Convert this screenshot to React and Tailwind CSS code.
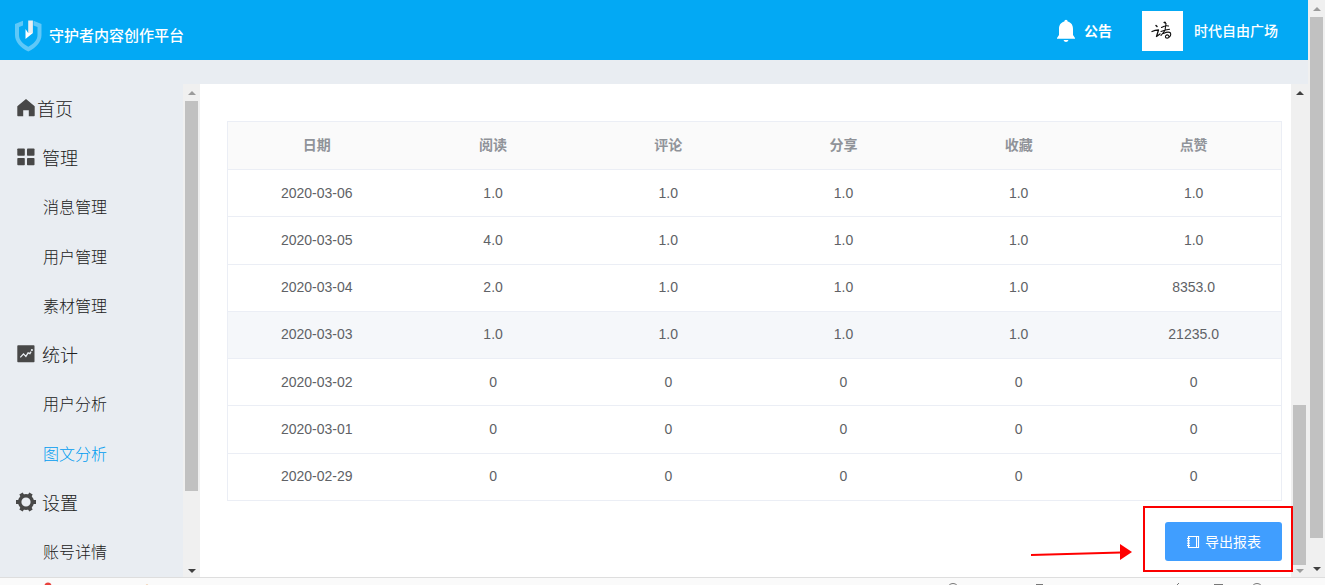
import React from "react";

const menu = [
  { label: "首页", icon: "home", tight: true },
  { label: "管理", icon: "grid" },
  { label: "消息管理" },
  { label: "用户管理" },
  { label: "素材管理" },
  { label: "统计", icon: "chart" },
  { label: "用户分析" },
  { label: "图文分析", active: true },
  { label: "设置", icon: "gear" },
  { label: "账号详情" },
];

const columns = ["日期", "阅读", "评论", "分享", "收藏", "点赞"];

const rows = [
  ["2020-03-06", "1.0", "1.0", "1.0", "1.0", "1.0"],
  ["2020-03-05", "4.0", "1.0", "1.0", "1.0", "1.0"],
  ["2020-03-04", "2.0", "1.0", "1.0", "1.0", "8353.0"],
  ["2020-03-03", "1.0", "1.0", "1.0", "1.0", "21235.0"],
  ["2020-03-02", "0", "0", "0", "0", "0"],
  ["2020-03-01", "0", "0", "0", "0", "0"],
  ["2020-02-29", "0", "0", "0", "0", "0"],
];

function MenuIcon({ name }) {
  return (
    <svg viewBox="0 0 20 20" className="mb-1 size-5 shrink-0 fill-[#484848]" aria-hidden="true">
      {name === "home" && <path d="M10 1 1.3 8.2v9.3q0 .7.7.7h5.2v-6h5.6v6H18q.7 0 .7-.7V8.2Z" />}
      {name === "grid" && (
        <>
          <rect x="1.3" y="1.5" width="7.5" height="7.2" rx=".8" />
          <rect x="11" y="1.5" width="7.5" height="7.2" rx=".8" />
          <rect x="1.3" y="11" width="7.5" height="7.2" rx=".8" />
          <rect x="11" y="11" width="7.5" height="7.2" rx=".8" />
        </>
      )}
      {name === "chart" && (
        <>
          <rect x="1.3" y="1.3" width="17.2" height="17" rx=".8" />
          <path d="m4.3 13.4 3.2-3.5 2.4 2.5 2.2-3.5 1.8.8 1.2-2" fill="none" stroke="#e9edf2" strokeWidth="1.3" />
          <circle cx="15.900" cy="6" r="1.1" fill="#e9edf2" />
        </>
      )}
      {name === "gear" && (
        <>
          <circle cx="10" cy="10" r="6.300" fill="none" stroke="#484848" strokeWidth="3.400" />
          <path d="M0 8h3v4H0ZM17 8h3v4h-3ZM3.300 2.400 6.700.4l1.500 2.600-3.400 2ZM13.300.4l3.400 2L15.200 5l-3.400-2ZM4.800 15l3.400 2-1.500 2.600-3.400-2ZM15.200 15l1.500 2.600-3.400 2-1.500-2.600Z" />
        </>
      )}
    </svg>
  );
}

function Arrow({ down, dark }) {
  return (
    <svg viewBox="0 0 8 4" className={`h-1 w-2 ${dark ? "fill-[#404040]" : "fill-[#9b9b9b]"}`} aria-hidden="true">
      <path d={down ? "M0 0h8L4 4Z" : "M4 0 8 4H0Z"} />
    </svg>
  );
}

function Scrollbar({ start, size, upDark, downDark, shortEnd }) {
  return (
    <div className="flex w-[17px] shrink-0 flex-col bg-[#f0f0f0]" aria-hidden="true">
      <div className="flex h-[17px] items-center justify-center">
        <Arrow dark={upDark} />
      </div>
      <div className="flex flex-1 flex-col px-0.5">
        <div style={{ height: `${start}%` }} />
        <div className="bg-[#c1c1c1]" style={{ height: `${size}%` }} />
      </div>
      <div className={`flex items-center justify-center ${shortEnd ? "h-3" : "h-[17px]"}`}>
        <Arrow down dark={downDark} />
      </div>
    </div>
  );
}

function Header() {
  return (
    <header className="flex h-15 shrink-0 items-center bg-[#03a9f4] pt-px pr-[30px] pl-[14px] text-white">
      <a href="#" className="flex items-center gap-[7px] pt-2.5">
        <svg viewBox="0 0 28 32" className="h-8 w-7" aria-hidden="true">
          <path d="M9 .8 1 4v11c0 6.500 5 12.500 13.300 16.600C22.500 27.500 27.500 21.500 27.500 15V4l-8-3.200v4.700l4 1.500v8c0 4.800-3.500 8.700-9.200 11.700C8.500 23.700 5 19.800 5 15V7l4-1.500Z" fill="#5fc8f8" />
          <path d="M14.200.5h4.700v12.600h-4.700Z" fill="#e9edf0" />
          <path d="M11.500 9v10l7.400-5.900-4.700-.2Z" fill="#fff" />
        </svg>
        <span className="text-[15px] leading-5 font-medium">守护者内容创作平台</span>
      </a>
      <div className="ml-auto flex items-center">
        <button type="button" className="flex items-center gap-2 text-[14px] leading-5 font-bold">
          <svg viewBox="0 0 20 24" className="h-6 w-5 fill-white" aria-hidden="true">
            <path d="M10 .8q1.600 0 1.700 1.700C15.600 3.600 17 6.500 17 10v6l2 3v.8H1V19l2-3v-6c0-3.500 1.400-6.400 5.300-7.500Q8.400.8 10 .8ZM7.500 21h5q-.6 2-2.500 2t-2.500-2Z" />
          </svg>
          公告
        </button>
        <a href="#" className="ml-[30px] flex items-center gap-[11px] text-[14px] leading-5 font-medium">
          <svg viewBox="0 0 41 40" className="h-10 w-[41px] bg-white" fill="none" stroke="#111" strokeLinecap="round" strokeLinejoin="round" aria-hidden="true">
            <path d="m14 14.500 1 1" strokeWidth="1.500" />
            <path d="M10 20.500q3-1.500 6.500-1.500l-2 6.500 3.500-2.500" strokeWidth="1.300" />
            <path d="M19.500 16.500q4-2.500 7-1.500M23.500 11.500q-.5-1-1.500 0l2 1-1 7M19 20.500q5-2 8.500-2.200M23 19.500l-4 5M21.500 22.500q5-2.500 7-.5 1 3-2.500 5-3 .5-2.500-2 2-2.500 3.500.5" strokeWidth="1.100" />
          </svg>
          时代自由广场
        </a>
      </div>
    </header>
  );
}

function Sidebar() {
  return (
    <nav className="flex w-[183px] shrink-0 flex-col">
      {menu.map((item) => (
        <a
          key={item.label}
          href="#"
          className={`flex flex-1 items-center pt-0.5 ${
            item.icon ? "pl-4 text-[18px]" : "pl-[43px] text-[16px]"
          } ${item.tight ? "gap-px" : "gap-1.5"} ${item.active ? "text-[#009cf0]" : "text-[#202020]"} font-light leading-6`}
        >
          {item.icon && <MenuIcon name={item.icon} />}
          {item.label}
        </a>
      ))}
    </nav>
  );
}

function ReportTable() {
  return (
    <table className="h-[380px] w-full table-fixed border border-[#ebeef5] text-center text-[14px] leading-5 text-[#606266]">
      <colgroup>
        <col className="w-[178px]" />
        <col span={5} />
      </colgroup>
      <thead>
        <tr className="h-12 border-b border-[#ebeef5] bg-[#fafafa] text-[#909399]">
          {columns.map((name) => (
            <th key={name} scope="col" className="pb-0.5 font-bold">{name}</th>
          ))}
        </tr>
      </thead>
      <tbody>
        {rows.map((row, index) => (
          <tr key={row[0]} className={`border-b border-[#ebeef5] ${index === 3 ? "bg-[#f5f7fa]" : ""}`}>
            {row.map((value, column) => (
              <td key={columns[column]} className="pb-px">{value}</td>
            ))}
          </tr>
        ))}
      </tbody>
    </table>
  );
}

function ExportButton() {
  return (
    <div className="relative mt-[21px] flex justify-end">
      <button type="button" className="flex h-[39px] items-center gap-[5px] rounded-[3px] bg-[#409eff] px-[21px] text-[14px] leading-5 text-white">
        <svg viewBox="0 0 14 14" className="size-3.5" fill="none" stroke="#fff" aria-hidden="true">
          <path d="M2.500 1.500h10v11h-10Z" strokeWidth="1.200" />
          <path d="M10.500 1.500v11M1 3.500h3M1 5.800h3M1 8.200h3M1 10.500h3" />
        </svg>
        导出报表
      </button>
      <div className="pointer-events-none absolute -top-4 -right-[11px] h-[66px] w-[150px] border-2 border-[#fb0000]" />
      <svg viewBox="0 0 104 18" className="pointer-events-none absolute top-[21px] right-[148px] h-[18px] w-[104px]" aria-hidden="true">
        <path d="m1 12 90-2.500" fill="none" stroke="#f00" strokeWidth="2" />
        <path d="m90 1 12 8-12 8Z" fill="#f00" />
      </svg>
    </div>
  );
}

function Taskbar() {
  return (
    <footer className="h-2 shrink-0 border-t border-[#dedede] bg-[#fafafa]">
      <svg className="h-[7px] w-full" aria-hidden="true">
        <circle cx="48" cy="8" r="3.500" fill="#e8413c" />
        <circle cx="147" cy="8" r="1.500" fill="#e8a060" />
        <g fill="none" stroke="#777">
          <circle cx="953" cy="11" r="5.500" />
          <path d="M1036 6.500h7M1214 6.500h9M1177 7l2-2" />
          <circle cx="1257" cy="11" r="5.500" />
        </g>
      </svg>
    </footer>
  );
}

export default function App() {
  return (
    <div className="flex h-screen flex-col overflow-hidden bg-[#e9edf2] font-['Liberation_Sans','Noto_Sans_CJK_SC',sans-serif]">
      <div className="flex min-h-0 flex-1">
        <div className="flex min-w-0 flex-1 flex-col">
          <Header />
          <div className="flex min-h-0 flex-1 pt-6">
            <Sidebar />
            <Scrollbar start={0} size={84} downDark shortEnd />
            <main className="min-w-0 flex-1 bg-white pt-[37px] pr-[9px] pl-[27px]">
              <ReportTable />
              <ExportButton />
            </main>
            <Scrollbar start={65.5} size={34.5} upDark shortEnd />
          </div>
        </div>
        <Scrollbar start={0} size={96} downDark />
      </div>
      <Taskbar />
    </div>
  );
}
